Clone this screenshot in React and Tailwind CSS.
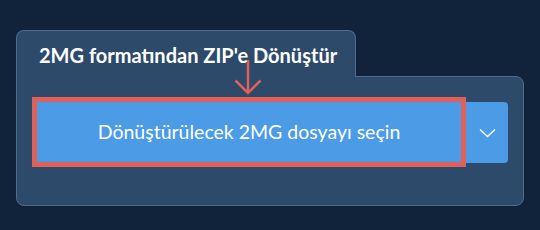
import React from "react";

export default function App() {
    return (
        <div
            className="relative w-[540px] h-[230px] bg-[#11233a] pt-[30px] pl-[16px]"
            style={{ fontFamily: "Lato, 'Noto Sans', sans-serif" }}
        >
            {/* Tab header */}
            <div className="relative z-10 w-[340px] h-[47px] -mb-px bg-[#2d4a6a] border border-b-0 border-[#4f6a8a] rounded-t-lg pl-[22px] pt-[12px]">
                <h1 className="text-[20px] leading-[24px] font-bold text-white">2MG formatından ZIP'e Dönüştür</h1>
            </div>

            {/* Panel body */}
            <div className="w-[508px] h-[130px] bg-[#2d4a6a] border border-[#4f6a8a] rounded-lg rounded-tl-none pl-[20px] pt-[25px]">
                <div className="flex items-start">
                    <button className="w-[424px] h-[60px] bg-[#4b9be6] text-white text-[19.5px] rounded-none outline-5 outline-[#e0605a]">
                        Dönüştürülecek 2MG dosyayı seçin
                    </button>
                    <button className="ml-[5px] w-[42px] h-[61px] bg-[#4b9be6] rounded-r-[4px] flex items-center justify-center">
                        <svg width="17" height="10" viewBox="0 0 17 10" fill="none">
                            <path d="M1 1.5 L8.5 8.5 L16 1.5" stroke="white" strokeWidth="1.4" />
                        </svg>
                    </button>
                </div>
            </div>

            {/* Pointer arrow */}
            <svg className="absolute z-20 left-[234px] top-[58px]" width="28" height="38" viewBox="0 0 28 38" fill="none">
                <path d="M14 2 L14 35" stroke="#e0605a" strokeWidth="2.5" />
                <path d="M1.5 22.5 L14 35 L26.5 22.5" stroke="#e0605a" strokeWidth="2.5" />
            </svg>
        </div>
    );
}
